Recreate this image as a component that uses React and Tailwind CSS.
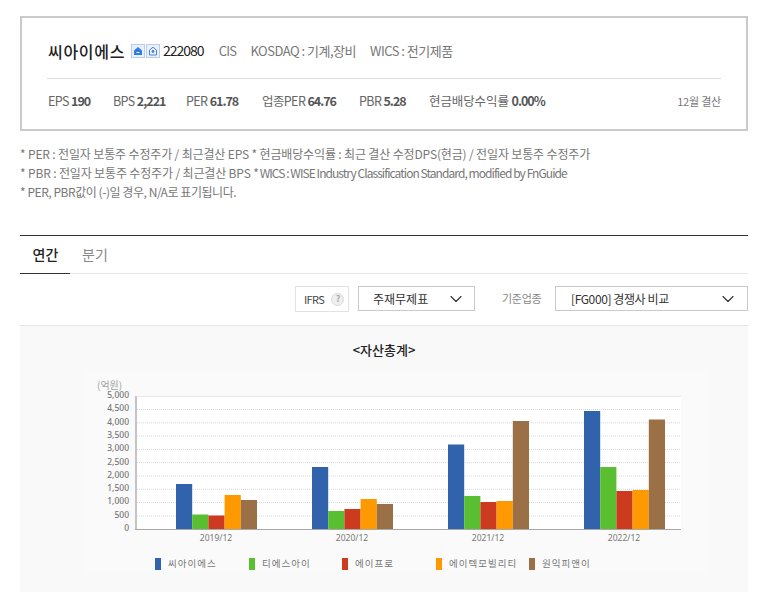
import { ChevronDown } from 'lucide-react';

const FONT = "font-['Noto_Sans_CJK_KR','Noto_Sans',sans-serif]";

const STATS = [
  { label: 'EPS', value: '190', w: 'w-[65px]', tr: 'tracking-[-0.6px]' },
  { label: 'BPS', value: '2,221', w: 'w-[73px]', tr: 'tracking-[-0.6px]' },
  { label: 'PER', value: '61.78', w: 'w-[76px]', tr: 'tracking-[-0.6px]' },
  { label: '업종PER', value: '64.76', w: 'w-[97px]', tr: 'tracking-[-0.6px]' },
  { label: 'PBR', value: '5.28', w: 'w-[70px]', tr: 'tracking-[-0.6px]' },
  { label: '현금배당수익률', value: '0.00%', w: '', tr: 'tracking-[-0.1px]' },
];

const COLORS = ['#3162ac', '#5abf30', '#cc3a20', '#ff9900', '#9c7047'];

const GROUPS = [
  { label: '2019/12', x: 176, tops: [484, 514.5, 515.5, 495, 500] },
  { label: '2020/12', x: 312, tops: [467, 511, 509, 499, 504] },
  { label: '2021/12', x: 448, tops: [444.5, 496, 502, 501, 421] },
  { label: '2022/12', x: 584, tops: [411, 467, 491, 490, 419.5] },
];

const LEGEND = [
  { name: '씨아이에스', x: 155 },
  { name: '티에스아이', x: 249 },
  { name: '에이프로', x: 342 },
  { name: '에이텍모빌리티', x: 436 },
  { name: '원익피앤이', x: 529 },
];

const TICKS = ['5,000', '4,500', '4,000', '3,500', '3,000', '2,500', '2,000', '1,500', '1,000', '500', '0'];

function Badge({ children }) {
  return (
    <span className="flex h-[14px] w-[14px] items-center justify-center border border-[#b9cdea] bg-[#e8f0fb]">
      <svg width="10" height="10" viewBox="0 0 10 10">{children}</svg>
    </span>
  );
}

// bar chart is a drawing, viewBox keeps the page coordinates
function Chart() {
  return (
    <svg width="728" height="266" viewBox="20 326 728 266" className="block">
      <rect x="86" y="370" width="620" height="203" fill="#fafafa" />
      <rect x="136" y="396" width="545" height="133" fill="#ffffff" />
      <line x1="136" y1="396.5" x2="681" y2="396.5" stroke="#ebebeb" />
      {TICKS.slice(1, 10).map((t, i) => (
        <line key={t} x1="137" x2="681" y1={409.5 + i * 13.3} y2={409.5 + i * 13.3} stroke="#d8d8d8" strokeDasharray="1 1" />
      ))}
      <line x1="136" y1="396" x2="136" y2="530" stroke="#c4c4c4" strokeWidth="2" />
      {GROUPS.map((g) =>
        g.tops.map((top, i) => (
          <rect key={g.label + i} x={g.x + i * 16.2} y={top} width="16.2" height={529 - top} fill={COLORS[i]} />
        ))
      )}
      <line x1="135" y1="529.5" x2="681" y2="529.5" stroke="#a8a8a8" />
      <text x="97" y="389" fontSize="10" fill="#a0a0a0" fontFamily="Noto Sans CJK KR">(억원)</text>
      {TICKS.map((t, i) => (
        <text key={t} x="129" y={398 + i * 13.3} textAnchor="end" fontSize="8.5" fontWeight="500" fill="#777" fontFamily="Noto Sans">{t}</text>
      ))}
      {GROUPS.map((g) => (
        <text key={g.label} x={g.x + 40} y="541" textAnchor="middle" fontSize="8.5" fill="#777" fontFamily="Noto Sans">{g.label}</text>
      ))}
      {LEGEND.map((l, i) => (
        <g key={l.name}>
          <rect x={l.x} y="558" width="6" height="12" fill={COLORS[i]} />
          <text x={l.x + 13} y="567" fontSize="9.5" letterSpacing="1" fill="#777" fontFamily="Noto Sans CJK KR">{l.name}</text>
        </g>
      ))}
    </svg>
  );
}

export default function App() {
  return (
    <div className={`${FONT} h-[592px] overflow-hidden bg-white pl-5 pr-[18px] pt-4 text-[12px] text-[#666]`}>
      {/* Company summary */}
      <div className="h-[115px] border-2 border-[#c9cacc] px-[25px]">
        <div className="flex h-[61px] items-center border-b border-[#dcdcdc] pt-[5px]">
          <strong className="w-[84px] whitespace-nowrap pl-[1px] text-[16px] font-medium tracking-[0.7px] text-[#222]">씨아이에스</strong>
          <div className="flex gap-[1px]">
            <Badge>
              <path d="M5 1 L9 4.5 V9 H1 V4.5 Z" fill="#2f7de1" />
              <rect x="3.5" y="6" width="3" height="1" fill="#fff" />
            </Badge>
            <Badge>
              <path d="M1.5 4 L5 1.2 L8.5 4 V9 H1.5 Z" fill="none" stroke="#4a86d8" />
              <circle cx="5" cy="5.5" r="1.4" fill="#4a86d8" />
            </Badge>
          </div>
          <span className="ml-[3px] text-[14px] tracking-[-1px] text-[#222]">222080</span>
          <span className="ml-[15px] text-[13px] tracking-[-0.7px] text-[#777]">CIS</span>
          <span className="ml-[14px] text-[13px] tracking-[-0.5px] text-[#777]">KOSDAQ : 기계,장비</span>
          <span className="ml-[14px] text-[13px] tracking-[-0.5px] text-[#777]">WICS : 전기제품</span>
        </div>
        <div className="flex h-[44px] items-center pl-[1px]">
          {STATS.map((s) => (
            <span key={s.label} className={`${s.w} whitespace-nowrap text-[12.5px] text-[#666] ${s.tr}`}>
              {s.label} <b className="font-bold tracking-[-1px] text-[#555]">{s.value}</b>
            </span>
          ))}
          <span className="ml-auto text-[11px] tracking-[-0.2px] text-[#777]">12월 결산</span>
        </div>
      </div>

      {/* Notes */}
      <div className="mt-[13px] text-[12px] leading-[19px] tracking-[-0.15px] text-[#777]">
        <p>* PER : 전일자 보통주 수정주가 / 최근결산 EPS * 현금배당수익률 : 최근 결산 수정DPS(현금) / 전일자 보통주 수정주가</p>
        <p>
          * PBR : 전일자 보통주 수정주가 / 최근결산 BPS{' '}
          <span className="tracking-[-0.94px]">* WICS : WISE Industry Classification Standard, modified by FnGuide</span>
        </p>
        <p className="tracking-[-0.45px]">* PER, PBR값이 (-)일 경우, N/A로 표기됩니다.</p>
      </div>

      {/* Tabs */}
      <div className="mt-[34px] flex h-[39px] border-t border-b border-t-[#333] border-b-[#e6e6e6]">
        <div className="-mb-px flex w-[50px] items-center justify-center border-b border-[#333] pl-[1px] text-[14px] font-medium text-[#222]">연간</div>
        <div className="ml-[12px] flex items-center text-[14px] text-[#888]">분기</div>
      </div>

      {/* Filters */}
      <div className="flex h-[52px] items-start justify-end border-b border-[#e6e6e6] pt-[12px]">
        <div className="flex h-[26px] w-[54px] items-center gap-[7px] border border-[#e2e2e2] pl-[8px] text-[11px] tracking-[-0.6px] text-[#444]">
          IFRS
          <span className="flex h-[13px] w-[13px] items-center justify-center rounded-full border border-[#dcdcdc] bg-[#eee] text-[9px] font-bold text-[#aaa]">?</span>
        </div>
        <div className="ml-[9px] flex h-[25px] w-[117px] items-center justify-between border border-[#c9cacc] pl-[14px] pr-[8px] text-[12px] text-[#333]">
          주재무제표
          <ChevronDown size={20} strokeWidth={1.4} />
        </div>
        <div className="ml-[27px] flex h-[25px] w-[41px] items-center whitespace-nowrap text-[11px] tracking-[-0.3px] text-[#888]">기준업종</div>
        <div className="ml-[12px] flex h-[25px] w-[193px] items-center justify-between border border-[#c9cacc] pl-[15px] pr-[9px] text-[12px] tracking-[-0.4px] text-[#333]">
          [FG000] 경쟁사 비교
          <ChevronDown size={20} strokeWidth={1.4} />
        </div>
      </div>

      {/* Chart panel */}
      <div className="bg-[#f9f9f9]">
        <div className="flex justify-center">
          <div className="h-0 translate-y-[14px] text-[13px] font-medium text-[#222]">&lt;자산총계&gt;</div>
        </div>
        <Chart />
      </div>
    </div>
  );
}
